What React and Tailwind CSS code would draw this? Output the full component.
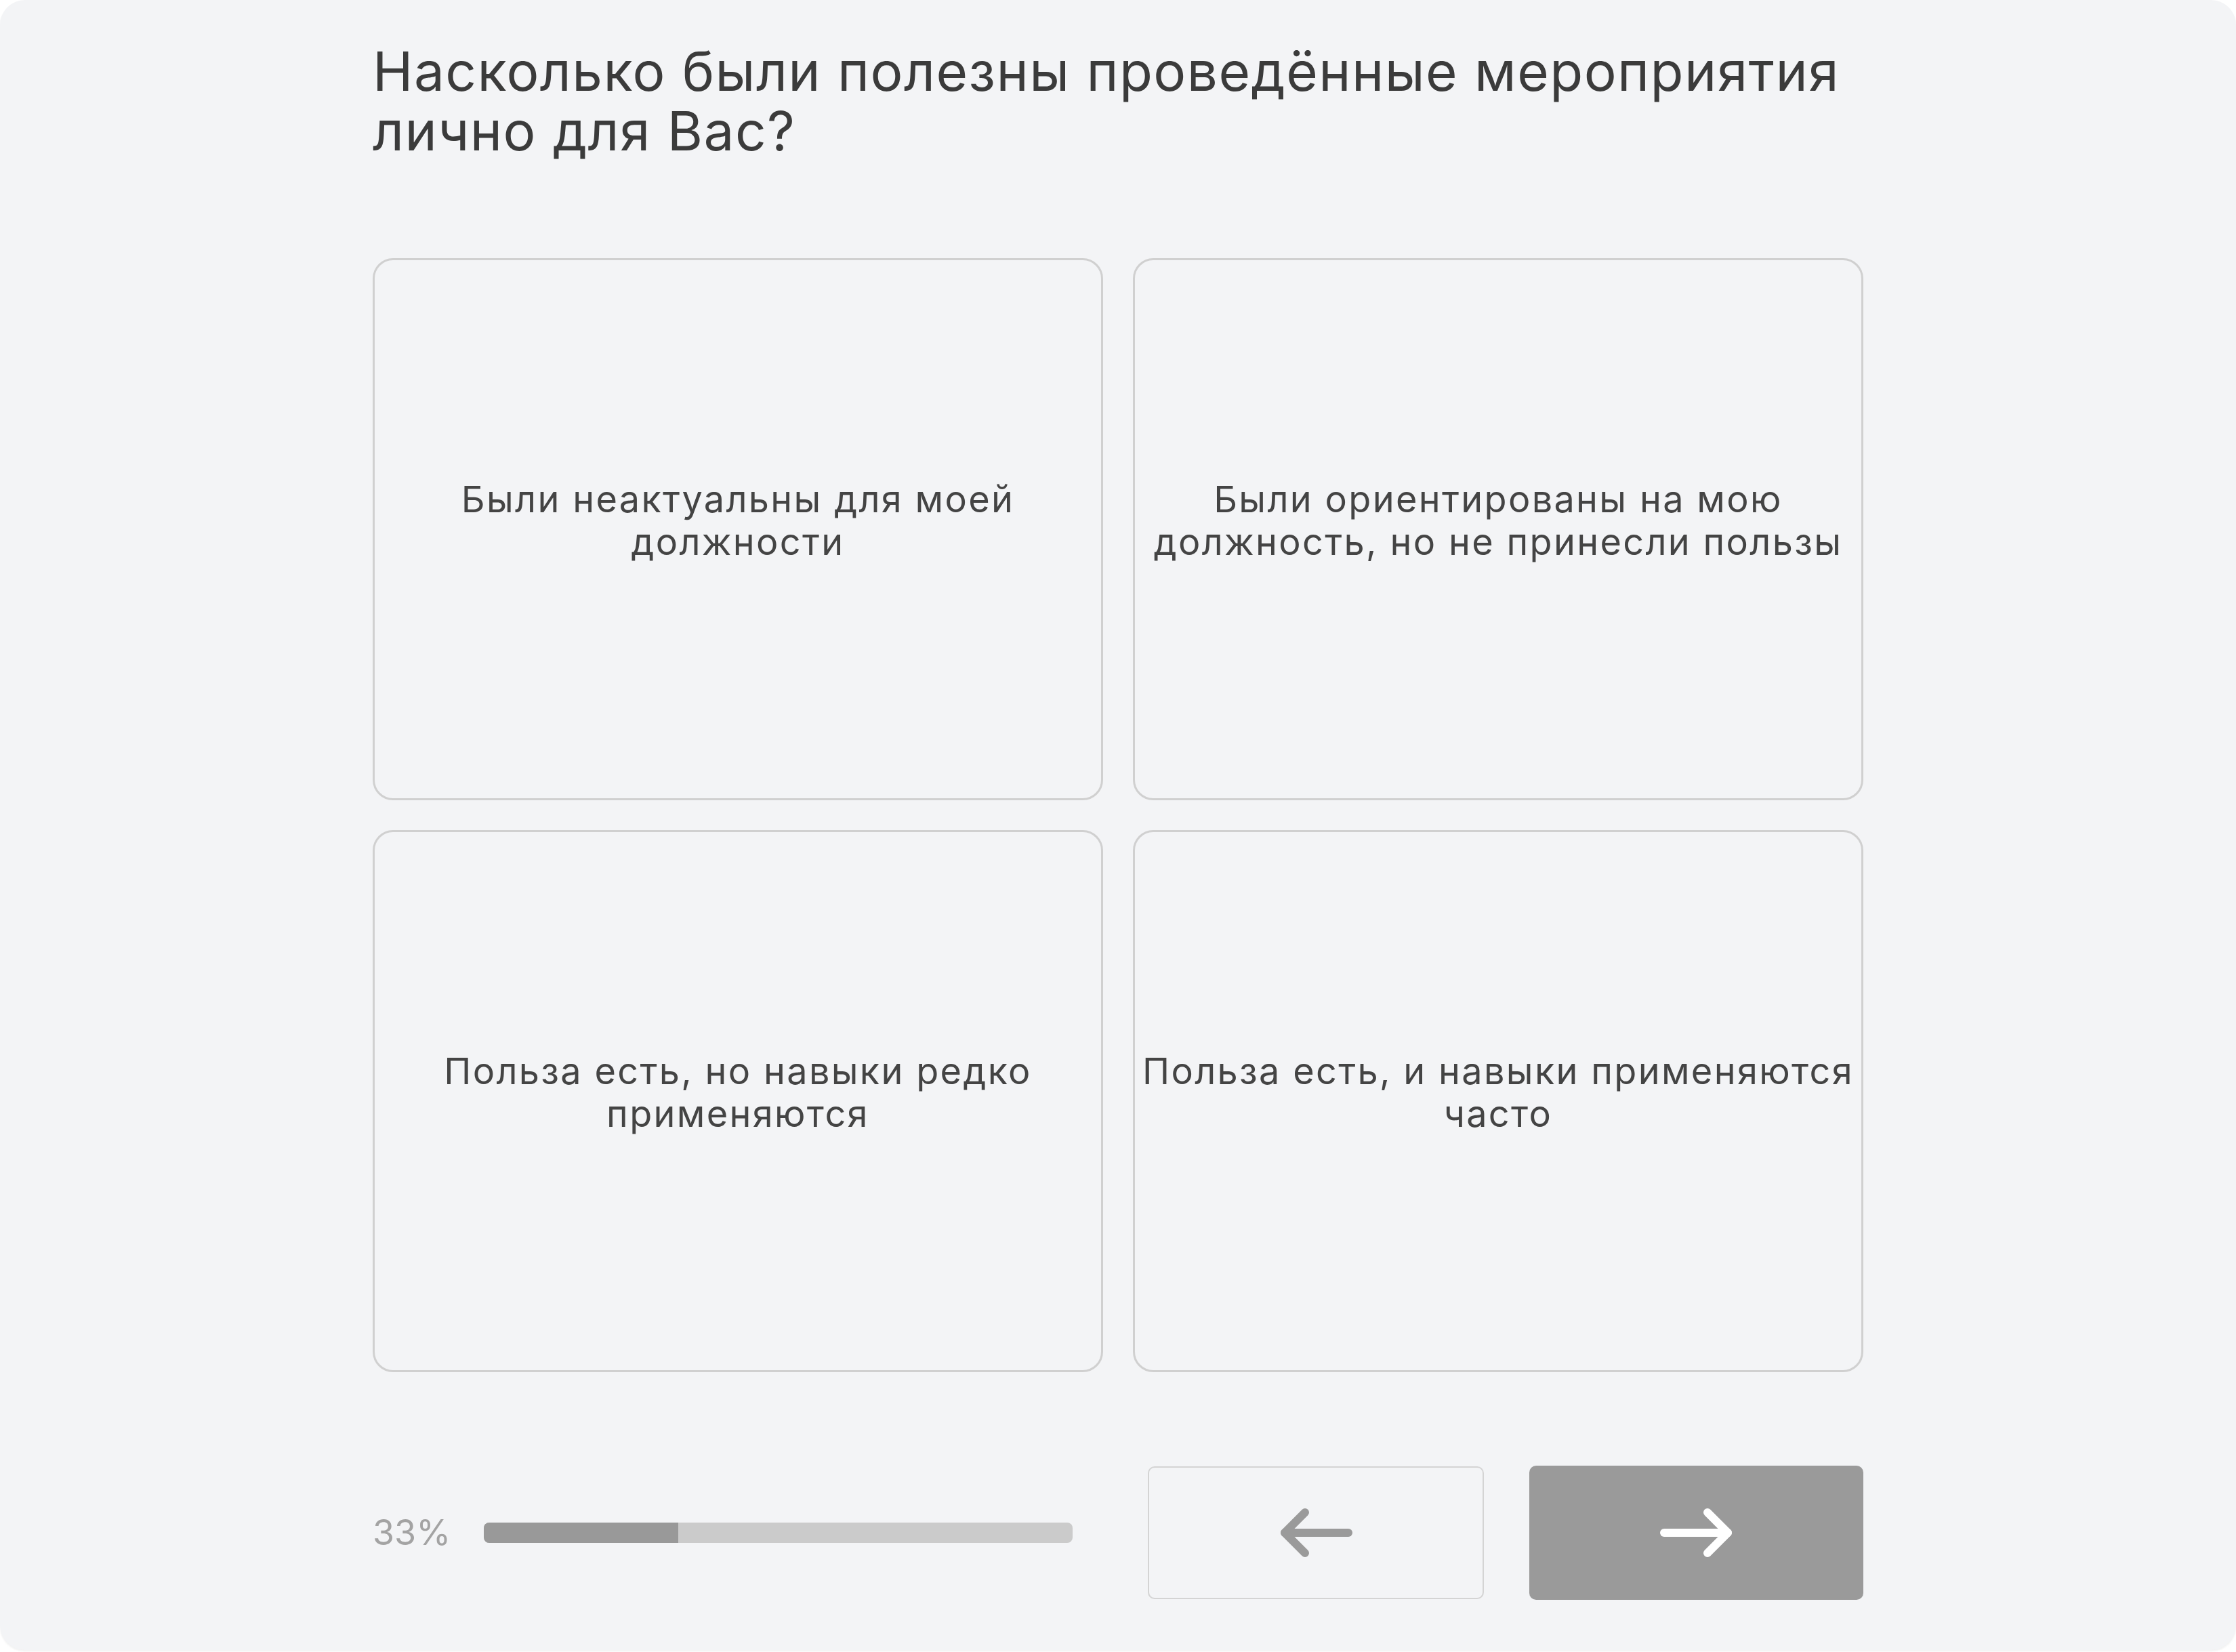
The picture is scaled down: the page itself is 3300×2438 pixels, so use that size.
import React from "react";

const cards = [
  ["Были неактуальны для моей", "должности"],
  ["Были ориентированы на мою", "должность, но не принесли пользы"],
  ["Польза есть, но навыки редко", "применяются"],
  ["Польза есть, и навыки применяются", "часто"],
];

function Arrow({ flip, color }) {
  return (
    <svg width="112" height="72" viewBox="0 0 112 72" fill="none" className={flip ? "rotate-180" : ""}>
      <path d="M104 36 H10" stroke={color} strokeWidth="12" strokeLinecap="round" />
      <path d="M40 6 L10 36 L40 66" stroke={color} strokeWidth="12" strokeLinecap="round" strokeLinejoin="round" />
    </svg>
  );
}

export default function App() {
  const progress = 33;
  return (
    <div className="w-[3300px] h-[2438px] bg-white" style={{ fontFamily: "Inter, 'Noto Sans', sans-serif" }}>
      <div className="w-full h-[2435px] bg-[#f3f4f6] rounded-[37px] shadow-[0_2px_3px_rgba(0,0,0,0.06)] flex justify-center">
        <div className="w-[2200px] flex flex-col">
          <h1 className="mt-[61px] text-[80px] leading-[88px] font-normal text-[#3b3b3b] tracking-[0.018em]">
            Насколько были полезны проведённые мероприятия
            <br />
            лично для Вас?
          </h1>

          <div className="mt-[144px] grid grid-cols-2 gap-[44px]">
            {cards.map((c, i) => (
              <button
                key={i}
                type="button"
                className="h-[800px] rounded-[30px] border-[3px] border-[#d0d0d0] bg-[#f3f4f6] flex items-center justify-center px-[10px] pb-[26px]"
              >
                <span className="text-center text-[54px] leading-[63px] text-[#444444] tracking-[0.043em] whitespace-nowrap">
                  {c[0]}
                  <br />
                  {c[1]}
                </span>
              </button>
            ))}
          </div>

          <div className="mt-[138px] flex items-center">
            <span className="w-[164px] text-[52px] leading-none text-[#a3a3a3]">{progress}%</span>
            <div className="w-[869px] h-[30px] rounded-[8px] bg-[#cbcbcb] overflow-hidden">
              <div className="h-full bg-[#999999]" style={{ width: `${progress}%` }} />
            </div>
            <button
              type="button"
              className="ml-[111px] w-[496px] h-[196px] rounded-[10px] border-2 border-[#d4d4d4] bg-[#f3f4f6] flex items-center justify-center"
            >
              <Arrow color="#9a9a9a" />
            </button>
            <button
              type="button"
              className="ml-[67px] w-[493px] h-[198px] rounded-[10px] bg-[#9a9a9a] flex items-center justify-center"
            >
              <Arrow flip color="#ffffff" />
            </button>
          </div>
        </div>
      </div>
    </div>
  );
}
